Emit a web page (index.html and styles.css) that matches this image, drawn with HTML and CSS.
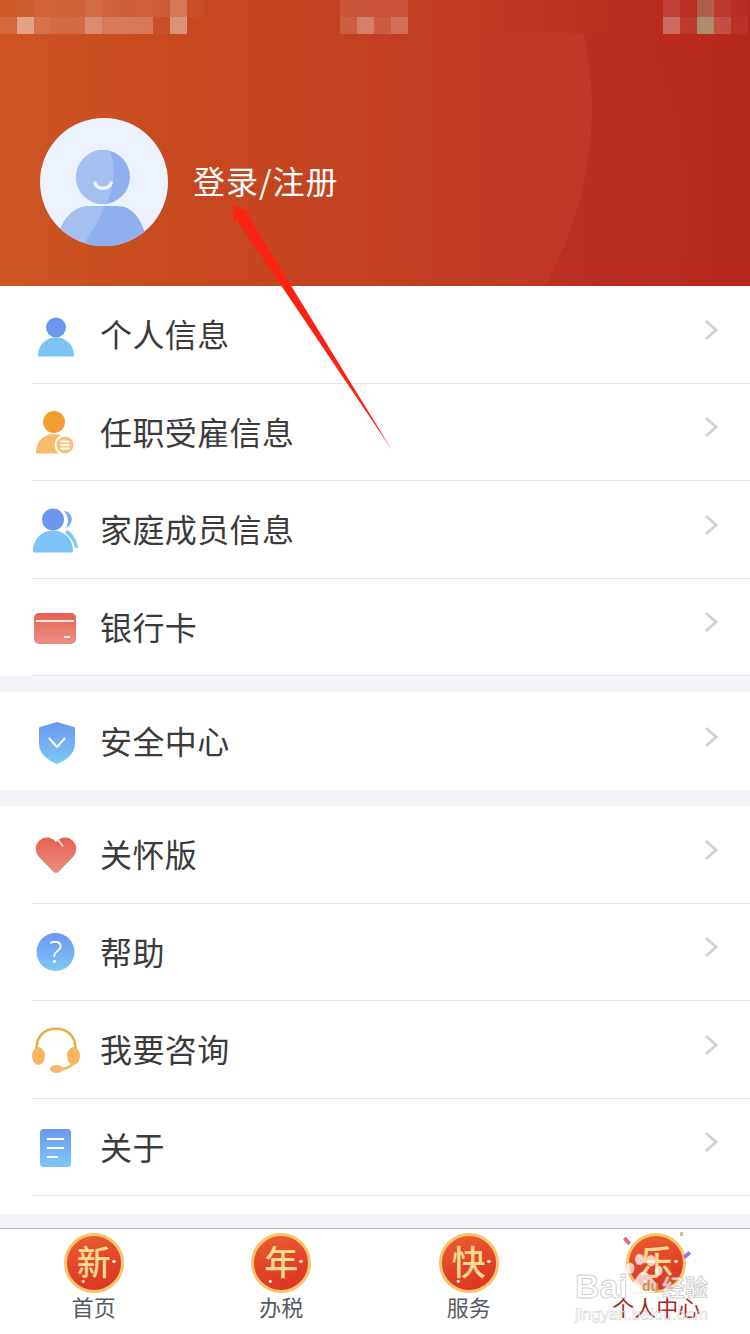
FILE: index.html
```html
<!DOCTYPE html>
<html>

<head>
  <title>个人中心</title>
  <link rel="stylesheet" href="styles.css">
</head>

<body>
  <svg class="defs" width="0" height="0">
    <defs>
      <linearGradient id="blue" x1="0" y1="0" x2="0" y2="1">
        <stop offset="0" stop-color="#6b97ee" />
        <stop offset="1" stop-color="#7cc8f8" />
      </linearGradient>
      <linearGradient id="orange" x1="0" y1="0" x2="0" y2="1">
        <stop offset="0" stop-color="#f0a036" />
        <stop offset="1" stop-color="#f6bd74" />
      </linearGradient>
      <linearGradient id="red" x1="0" y1="0" x2="0" y2="1">
        <stop offset="0" stop-color="#e5604f" />
        <stop offset="1" stop-color="#ec9184" />
      </linearGradient>
      <linearGradient id="swoosh" x1="0" y1="0" x2="1" y2="0">
        <stop offset="0" stop-color="#c53e2c" stop-opacity="0" />
        <stop offset="1" stop-color="#c53e2c" stop-opacity="0.55" />
      </linearGradient>
      <clipPath id="avatarClip">
        <circle cx="64" cy="64" r="64" />
      </clipPath>
    </defs>
  </svg>

  <div class="header">
    <svg class="header-bg" width="750" height="286" viewBox="0 0 750 286">
      <path d="M470 33 H584 C598 100 598 190 545 286 H470 Z" fill="url(#swoosh)" />
      <path d="M584 33 H645 C690 120 700 210 680 286 H545 C598 190 598 100 584 33 Z" fill="#ba2e22" opacity="0.55" />
      <g fill="#fff">
        <rect x="0" y="0" width="17" height="17" opacity="0.03" />
        <rect x="17" y="0" width="17" height="17" opacity="0.06" />
        <rect x="34" y="0" width="17" height="17" opacity="0.1" />
        <rect x="51" y="0" width="17" height="17" opacity="0.1" />
        <rect x="68" y="0" width="17" height="17" opacity="0.1" />
        <rect x="85" y="0" width="17" height="17" opacity="0.16" />
        <rect x="102" y="0" width="17" height="17" opacity="0.12" />
        <rect x="119" y="0" width="17" height="17" opacity="0.1" />
        <rect x="136" y="0" width="17" height="17" opacity="0.12" />
        <rect x="153" y="0" width="17" height="17" opacity="0.1" />
        <rect x="170" y="0" width="17" height="17" opacity="0.25" />
        <rect x="187" y="0" width="17" height="17" opacity="0.04" />
        <rect x="0" y="17" width="17" height="17" opacity="0.12" />
        <rect x="17" y="17" width="17" height="17" opacity="0.45" />
        <rect x="34" y="17" width="17" height="17" opacity="0.18" />
        <rect x="51" y="17" width="17" height="17" opacity="0.15" />
        <rect x="68" y="17" width="17" height="17" opacity="0.15" />
        <rect x="85" y="17" width="17" height="17" opacity="0.35" />
        <rect x="102" y="17" width="17" height="17" opacity="0.25" />
        <rect x="119" y="17" width="17" height="17" opacity="0.25" />
        <rect x="136" y="17" width="17" height="17" opacity="0.25" />
        <rect x="153" y="17" width="17" height="17" opacity="0.03" />
        <rect x="170" y="17" width="17" height="17" opacity="0.4" />
        <rect x="340" y="0" width="68" height="17" opacity="0.1" />
        <rect x="340" y="17" width="17" height="17" opacity="0.15" />
        <rect x="357" y="17" width="17" height="17" opacity="0.32" />
        <rect x="374" y="17" width="17" height="17" opacity="0.15" />
        <rect x="391" y="17" width="17" height="17" opacity="0.25" />
        <rect x="663" y="0" width="17" height="17" opacity="0.1" />
        <rect x="680" y="0" width="17" height="17" opacity="0.03" />
        <rect x="714" y="0" width="17" height="17" opacity="0.08" />
        <rect x="731" y="0" width="17" height="17" opacity="0.03" />
        <rect x="663" y="17" width="17" height="17" opacity="0.3" />
        <rect x="680" y="17" width="17" height="17" opacity="0.08" />
        <rect x="714" y="17" width="17" height="17" opacity="0.18" />
        <rect x="731" y="17" width="17" height="17" opacity="0.05" />
      </g>
      <rect x="697" y="0" width="17" height="17" fill="#b0604a" />
      <rect x="697" y="17" width="17" height="17" fill="#ad8c6c" />
    </svg>
    <svg class="avatar" width="128" height="128" viewBox="0 0 128 128">
      <circle cx="64" cy="64" r="64" fill="#edf3fe" />
      <g clip-path="url(#avatarClip)">
        <circle cx="63" cy="59" r="27" fill="#8fb0ee" />
        <path d="M63 32 C48 32 36 45 36 59 C36 74 48 86 63 86 C64.500 86 66 86 67 85.500 C74 70 76 50 70 33 C68 32.300 65 32 63 32 Z" fill="#a5bff1" />
        <path d="M20 128 V112 C25 98 36 88 50 88 H77 C92 88 103 100 108 128 Z" fill="#8fb0ee" />
        <path d="M20 128 V112 C25 98 36 88 50 88 H64 C60 102 52 114 42 128 Z" fill="#a5bff1" />
      </g>
      <path d="M55 65 C57 72 69 72 71 65" fill="none" stroke="#edf3fe" stroke-width="3.5" stroke-linecap="round" />
    </svg>
    <div class="login">登录/注册</div>
  </div>

  <div class="group">
    <div class="row">
      <svg class="icon" viewBox="0 0 48 48">
        <circle cx="24" cy="17.5" r="10" fill="#6b97ee" />
        <path d="M6 45 C6 35 14 27.5 24 27.5 C34 27.5 42 35 42 45 C42 46 41.500 46.500 41 46.500 H7 C6.500 46.500 6 46 6 45 Z" fill="#7cc4f6" />
      </svg>
      <span class="label">个人信息</span>
      <svg class="chevron" width="14" height="22" viewBox="0 0 14 22"><polyline points="2,2 12,11 2,20" /></svg>
    </div>
    <div class="row">
      <svg class="icon" viewBox="0 0 48 48">
        <circle cx="22" cy="14" r="11" fill="#f0a033" />
        <path d="M4 44 C4 33 12 26 22 26 C32 26 40 33 40 44 C40 45 39.500 45.500 39 45.500 H5 C4.500 45.500 4 45 4 44 Z" fill="#f6bb6e" />
        <circle cx="33" cy="37" r="9.500" fill="#f6c07c" stroke="#fff" stroke-width="2" />
        <path d="M28.500 33.500 H37.500 M28.500 37 H37.500 M28.500 40.500 H37.500" stroke="#fff" stroke-width="1.800" />
      </svg>
      <span class="label">任职受雇信息</span>
      <svg class="chevron" width="14" height="22" viewBox="0 0 14 22"><polyline points="2,2 12,11 2,20" /></svg>
    </div>
    <div class="row">
      <svg class="icon" viewBox="0 0 48 48">
        <path d="M32 6 C41 7 43 18 34 23 C37 17 37 12 32 6 Z" fill="#7ea6ee" />
        <path d="M35 25 C41 28 45 35 46 43 H43 C42 37 38 32 33 28 Z" fill="#85c6f4" />
        <circle cx="21" cy="14.500" r="11" fill="#6b97ee" />
        <path d="M1 46 C1 34 10 25.500 21 25.500 C32 25.500 41 34 41 46 C41 47 40.500 47.500 40 47.500 H2 C1.500 47.500 1 47 1 46 Z" fill="#7cc4f6" />
      </svg>
      <span class="label">家庭成员信息</span>
      <svg class="chevron" width="14" height="22" viewBox="0 0 14 22"><polyline points="2,2 12,11 2,20" /></svg>
    </div>
    <div class="row">
      <svg class="icon" viewBox="0 0 48 48">
        <rect x="2" y="10" width="42" height="31" rx="5" fill="url(#red)" />
        <rect x="4" y="17" width="38" height="2" fill="#fdeeea" />
        <rect x="32" y="33" width="6" height="2" fill="#fdeeea" />
      </svg>
      <span class="label">银行卡</span>
      <svg class="chevron" width="14" height="22" viewBox="0 0 14 22"><polyline points="2,2 12,11 2,20" /></svg>
    </div>
  </div>

  <div class="group">
    <div class="row row-last">
      <svg class="icon" viewBox="0 0 48 48">
        <path d="M25 5 L42 10 C42.600 10.200 43 10.700 43 11.300 V27 C43 37 33 44 25 47 C17 44 7 37 7 27 V11.300 C7 10.700 7.400 10.200 8 10 Z" fill="url(#blue)" />
        <polyline points="17,21 25,30 33,21" fill="none" stroke="#fff" stroke-width="2" />
      </svg>
      <span class="label">安全中心</span>
      <svg class="chevron" width="14" height="22" viewBox="0 0 14 22"><polyline points="2,2 12,11 2,20" /></svg>
    </div>
  </div>

  <div class="group group-end">
    <div class="row">
      <svg class="icon" viewBox="0 0 48 48">
        <path d="M24 43 C23 43 22 42.500 21 41.500 L7 27 C2 21 3 14 8 10 C13 6 20 7 24 12 C28 7 35 6 40 10 C45 14 46 21 41 27 L27 41.500 C26 42.500 25 43 24 43 Z" fill="url(#red)" />
        <path d="M25 9 L31 16" stroke="#fff" stroke-width="1.500" />
      </svg>
      <span class="label">关怀版</span>
      <svg class="chevron" width="14" height="22" viewBox="0 0 14 22"><polyline points="2,2 12,11 2,20" /></svg>
    </div>
    <div class="row">
      <svg class="icon" viewBox="0 0 48 48">
        <circle cx="23.500" cy="24" r="19" fill="url(#blue)" />
        <text class="help-mark" x="23.500" y="35">?</text>
      </svg>
      <span class="label">帮助</span>
      <svg class="chevron" width="14" height="22" viewBox="0 0 14 22"><polyline points="2,2 12,11 2,20" /></svg>
    </div>
    <div class="row">
      <svg class="icon" viewBox="0 0 48 48">
        <path d="M4.500 24 C4.500 11 12 3.800 24 3.800 C36 3.800 43.500 11 43.500 24" fill="none" stroke="#eeaa40" stroke-width="2.500" />
        <ellipse cx="6.500" cy="31" rx="6.500" ry="9" fill="#f5b45e" />
        <ellipse cx="41.500" cy="31" rx="6.500" ry="9" fill="#f5b45e" />
        <path d="M41 39 C38 42 34 44 28 44.500" fill="none" stroke="#f5b45e" stroke-width="2.500" />
        <ellipse cx="24.500" cy="44" rx="6.500" ry="4" fill="#f5b870" />
      </svg>
      <span class="label">我要咨询</span>
      <svg class="chevron" width="14" height="22" viewBox="0 0 14 22"><polyline points="2,2 12,11 2,20" /></svg>
    </div>
    <div class="row">
      <svg class="icon" viewBox="0 0 48 48">
        <rect x="8" y="6" width="31" height="38" rx="3.500" fill="url(#blue)" />
        <path d="M15 16 H32 M15 25 H32 M15 34 H26" stroke="#fff" stroke-width="2" />
      </svg>
      <span class="label">关于</span>
      <svg class="chevron" width="14" height="22" viewBox="0 0 14 22"><polyline points="2,2 12,11 2,20" /></svg>
    </div>
  </div>

  <div class="tabbar">
    <div class="tab">
      <div class="coin">新</div>
      <div class="tab-label">首页</div>
    </div>
    <div class="tab">
      <div class="coin">年</div>
      <div class="tab-label">办税</div>
    </div>
    <div class="tab">
      <div class="coin">快</div>
      <div class="tab-label">服务</div>
    </div>
    <div class="tab tab-active">
      <div class="coin">乐</div>
      <div class="tab-label">个人中心</div>
      <span class="confetti confetti-pink"></span>
      <span class="confetti confetti-purple"></span>
      <span class="confetti confetti-gold"></span>
    </div>
  </div>

  <!-- arrow drawn over the screenshot -->
  <svg class="arrow" width="750" height="460" viewBox="0 0 750 460">
    <polygon points="233,205 251,213 247,214 392,450 237,220 234,223" fill="#fb2212" />
  </svg>

  <div class="watermark">
    <svg class="paw" width="42" height="42" viewBox="0 0 62 66">
      <g fill="#fff" fill-opacity="0.72" stroke="#aaa" stroke-opacity="0.35">
        <ellipse cx="9" cy="24" rx="7" ry="9" />
        <ellipse cx="24" cy="10" rx="7" ry="9" />
        <ellipse cx="42" cy="12" rx="7" ry="9" />
        <ellipse cx="54" cy="28" rx="6" ry="8" />
        <path d="M30 30 C40 30 42 40 49 46 C56 54 50 64 40 63 C33 62 27 62 20 63 C10 64 6 54 13 47 C20 41 21 30 30 30 Z" />
      </g>
    </svg>
    <span class="wm-du">du</span>
    <span class="wm-bai">Bai</span>
    <span class="wm-jy">经验</span>
    <span class="wm-url">jingyan.baidu.com</span>
  </div>
</body>

</html>
```

FILE: styles.css
```css
* {
  box-sizing: border-box;
}

html,
body {
  margin: 0;
  height: 1334px;
  overflow: hidden;
}

body {
  position: relative;
  width: 750px;
  background-color: #f4f5f8;
  font-family: "Noto Sans CJK SC", "Noto Sans", sans-serif;
}

.defs {
  position: absolute;
}

.header {
  position: relative;
  display: flex;
  align-items: center;
  gap: 25px;
  height: 286px;
  padding: 78px 0 0 40px;
  background: linear-gradient(90deg, #cd5624 0%, #c7491f 25%, #c03d22 60%, #bb2f1f 80%, #b5271a 100%);
}

.header-bg {
  position: absolute;
  top: 0;
  left: 0;
}

.avatar {
  position: relative;
  flex: none;
}

.login {
  position: relative;
  padding-bottom: 4px;
  font-size: 32px;
  letter-spacing: 1px;
  line-height: 44px;
  color: #fff;
}

.group {
  background-color: #fff;
  margin-bottom: 16px;
}

.group-end {
  padding-bottom: 18px;
  margin-bottom: 14px;
}

.row {
  display: flex;
  align-items: center;
  height: 97.5px;
  margin-left: 32px;
  padding-right: 32px;
  border-bottom: 1px solid #e3e3e5;
}

.row-last {
  height: 98px;
  border-bottom: none;
}

.icon {
  flex: none;
  width: 48px;
  height: 48px;
  margin-right: 20px;
}

.label {
  flex: 1;
  padding-bottom: 2px;
  font-size: 32px;
  letter-spacing: 0.4px;
  line-height: 44px;
  color: #3b3b3b;
}

.chevron {
  flex: none;
  margin-bottom: 9px;
}

.chevron polyline {
  fill: none;
  stroke: #d2d2d2;
  stroke-width: 3;
}

.help-mark {
  font-family: "Noto Sans", sans-serif;
  font-size: 31px;
  font-weight: 300;
  fill: #fff;
  text-anchor: middle;
}

.tabbar {
  display: flex;
  height: 106px;
  padding-top: 4px;
  background-color: #fff;
  border-top: 1px solid #b9b9c1;
}

.tab {
  position: relative;
  flex: 1;
  display: flex;
  flex-direction: column;
  align-items: center;
}

.coin {
  width: 60px;
  height: 60px;
  border: 3px solid #f7c46c;
  border-radius: 50%;
  background:
    radial-gradient(circle at 87% 47%, #ffe9d0 0 1.500px, transparent 2px),
    radial-gradient(circle at 30% 84%, #ffd9c0 0 1.200px, transparent 2px),
    linear-gradient(165deg, #e9602e 0%, #e2452a 50%, #db3320 100%);
  font-size: 34px;
  font-weight: 500;
  line-height: 50px;
  text-align: center;
  color: #fbd98e;
}

.tab-label {
  margin-top: 1px;
  font-size: 22px;
  line-height: 24px;
  color: #555a60;
}

.tab-active .tab-label {
  color: #a8281f;
}

.confetti {
  position: absolute;
  width: 4px;
  height: 8px;
  border-radius: 1px;
}

.confetti-pink {
  top: 4px;
  left: 62px;
  background-color: #e26a88;
  transform: rotate(-40deg);
}

.confetti-purple {
  top: 18px;
  left: 122px;
  background-color: #a774e0;
  transform: rotate(50deg);
}

.confetti-gold {
  top: -1px;
  left: 117px;
  width: 3px;
  height: 4px;
  background-color: #d9b27a;
}

.arrow {
  position: absolute;
  top: 0;
  left: 0;
}

.watermark {
  position: absolute;
  top: 1236px;
  left: 575px;
  width: 140px;
  height: 90px;
}

.paw {
  position: absolute;
  top: 17px;
  left: 48px;
}

.wm-bai,
.wm-jy,
.wm-url {
  position: absolute;
  font-family: "Liberation Sans", sans-serif;
  color: rgba(255, 255, 255, 0.7);
  -webkit-text-stroke: 1px rgba(165, 165, 165, 0.55);
}

.wm-bai {
  top: 32px;
  left: 0;
  font-size: 34px;
  line-height: 36px;
  font-weight: 700;
}

.wm-jy {
  top: 36px;
  left: 87px;
  font-family: "Noto Sans CJK SC", sans-serif;
  font-size: 23px;
  line-height: 28px;
  font-weight: 700;
}

.wm-url {
  top: 68px;
  left: 0;
  font-size: 16.5px;
  line-height: 20px;
  -webkit-text-stroke: 0.5px rgba(165, 165, 165, 0.55);
}

.wm-du {
  position: absolute;
  top: 42px;
  left: 67px;
  font-family: "Liberation Sans", sans-serif;
  font-size: 14px;
  font-weight: 700;
  line-height: 16px;
  color: #c9964f;
}
```
